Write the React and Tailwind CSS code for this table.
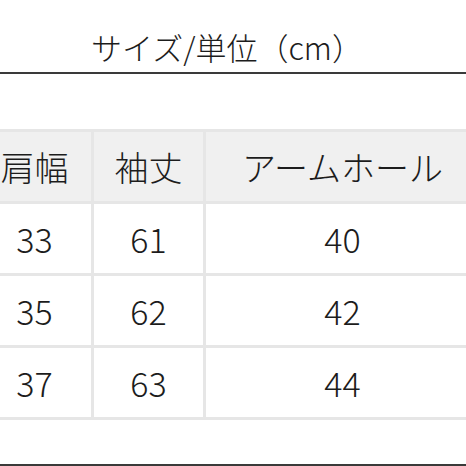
import React from 'react';

const headers = ['肩幅', '袖丈', 'アームホール'];
const rows = [
  ['33', '61', '40'],
  ['35', '62', '42'],
  ['37', '63', '44'],
];

const font = { fontFamily: '"Noto Sans CJK JP", "Noto Sans", sans-serif' };

export default function App() {
  return (
    <div className="w-[466px] h-[466px] overflow-hidden bg-white text-[#1c1c1c] font-light" style={font}>
      {/* Title */}
      <div className="h-[72px] flex items-end justify-center pr-[12px] pb-[10px]">
        <span className="text-[31px] leading-none">サイズ/単位（cm）</span>
      </div>
      <div className="h-[2px] bg-[#3a3a3a]" />

      {/* Size table */}
      <div className="mt-[55px] ml-[-22px] w-[501px] grid grid-cols-[113px_109px_273px] gap-[3px] py-[3px] bg-[#e6e6e6]">
        {headers.map((h) => (
          <div key={h} className="h-[69px] bg-[#f0f0f0] flex items-center justify-center text-[34px] leading-none">
            {h}
          </div>
        ))}
        {rows.map((row, i) =>
          row.map((v, j) => (
            <div key={`${i}-${j}`} className="h-[69px] bg-white flex items-center justify-center text-[34px] leading-none">
              {v}
            </div>
          ))
        )}
      </div>

      <div className="mt-[44px] h-[2px] bg-[#3a3a3a]" />
    </div>
  );
}
